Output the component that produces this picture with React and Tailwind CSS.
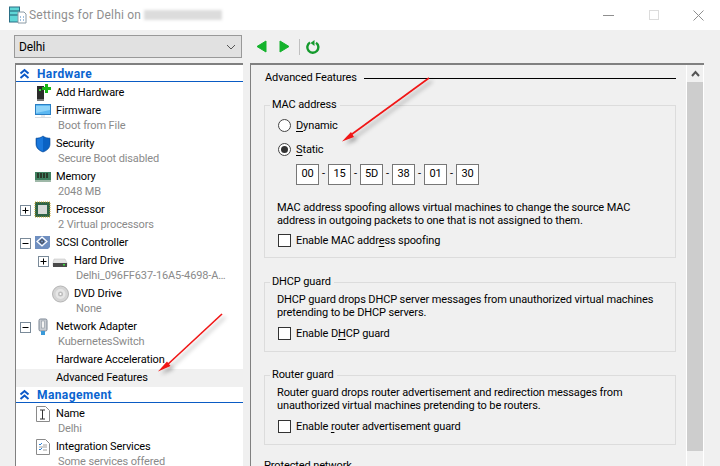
import React from "react";

const Plus = ({ minus }) => (
  <svg width="11" height="11" viewBox="0 0 11 11" className="shrink-0">
    <rect x="0.5" y="0.5" width="10" height="10" fill="#fff" stroke="#7a8a99" />
    <path d="M2.5 5.5h6" stroke="#000" />
    {!minus && <path d="M5.5 2.5v6" stroke="#000" />}
  </svg>
);

const icons = {
  add: (
    <svg width="18" height="18" viewBox="0 0 18 18">
      <rect x="3" y="2" width="7" height="14" fill="#2b2b2b" />
      <rect x="3" y="15" width="7" height="2" fill="#777" />
      <rect x="5" y="5" width="2" height="2" fill="#3ddc3d" />
      <path d="M11 0h3v3h3v3h-3v3h-3V6H8V3h3z" fill="#16b516" />
    </svg>
  ),
  firmware: (
    <svg width="18" height="18" viewBox="0 0 18 18">
      <rect x="1.5" y="2.5" width="15" height="10" fill="#5cb8f2" stroke="#2a7fc4" />
      <path d="M2 4h14v4L2 11z" fill="#8ed4fa" />
      <rect x="1" y="15" width="16" height="1" fill="#d8dde2" />
      <rect x="7" y="13" width="4" height="2" fill="#e8eaec" />
    </svg>
  ),
  security: (
    <svg width="18" height="18" viewBox="0 0 18 18">
      <path d="M9 1c2 1.600 4.500 2.200 7 2.200V9c0 4-3 6.500-7 8-4-1.500-7-4-7-8V3.200C4.500 3.200 7 2.600 9 1z" fill="#0a62c4" stroke="#0a4a96" strokeWidth="0.6" />
      <path d="M9 1.600V16.400C5.600 15 3 12.800 3 9V4c2.400 0 4.300-.8 6-2.400z" fill="#1a78dc" />
    </svg>
  ),
  memory: (
    <svg width="18" height="18" viewBox="0 0 18 18">
      <rect x="1" y="4" width="16" height="8" fill="#3f7f5f" />
      <rect x="3" y="5" width="2" height="5" fill="#2a3a2a" />
      <rect x="6" y="5" width="2" height="5" fill="#2a3a2a" />
      <rect x="9" y="5" width="2" height="5" fill="#2a3a2a" />
      <rect x="12" y="5" width="2" height="5" fill="#2a3a2a" />
      <rect x="1" y="12" width="16" height="2" fill="#9fb8a8" />
    </svg>
  ),
  cpu: (
    <svg width="18" height="18" viewBox="0 0 18 18">
      <rect x="1" y="1" width="15" height="15" fill="#2f6446" stroke="#c9a227" strokeDasharray="1 1" />
      <rect x="4" y="4" width="9" height="9" fill="#d6d9d6" />
    </svg>
  ),
  scsi: (
    <svg width="18" height="18" viewBox="0 0 18 18">
      <path d="M1 2h15v11l-2 2H1z" fill="#6f8fc0" />
      <path d="M8 3l5 4.500-5 4.500-5-4.500z" fill="none" stroke="#fff" strokeWidth="1.200" />
      <path d="M8 5.500l2.200 2-2.200 2-2.200-2z" fill="none" stroke="#333" />
    </svg>
  ),
  hdd: (
    <svg width="16" height="18" viewBox="0 0 16 18">
      <path d="M2 7h11l2 4v3H1v-3z" fill="#e4e4e4" stroke="#bbb" strokeWidth="0.5" />
      <rect x="1" y="11" width="14" height="4" fill="#4a4a4a" />
      <rect x="11" y="12" width="2" height="1.500" fill="#3ddc3d" />
    </svg>
  ),
  dvd: (
    <svg width="18" height="18" viewBox="0 0 18 18">
      <circle cx="8.500" cy="9" r="8" fill="#d4d4d4" stroke="#b5b5b5" />
      <circle cx="8.500" cy="9" r="5" fill="#e6e6e6" />
      <circle cx="8.500" cy="9" r="2.500" fill="#bdbdbd" />
      <circle cx="8.500" cy="9" r="1" fill="#fff" />
    </svg>
  ),
  net: (
    <svg width="18" height="18" viewBox="0 0 18 18">
      <rect x="5" y="1" width="8" height="12" rx="1.500" fill="#c8ccd2" stroke="#7d8794" />
      <rect x="7.500" y="3" width="3" height="7" fill="#f2f2f2" stroke="#8d96a2" strokeWidth="0.6" />
      <rect x="7" y="13" width="4" height="4" fill="#3a9ad9" />
    </svg>
  ),
  name: (
    <svg width="18" height="18" viewBox="0 0 18 18">
      <path d="M2.500 1.500h9l4 4v11h-13z" fill="#fff" stroke="#8a8a8a" />
      <path d="M6 5h2.500M11 5H8.500M8.500 5v9M6 14h5" stroke="#333" fill="none" />
    </svg>
  ),
  integ: (
    <svg width="18" height="18" viewBox="0 0 18 18">
      <path d="M2.500 1.500h9l4 4v11h-13z" fill="#fff" stroke="#8a8a8a" />
      <path d="M5 6l1 1 2-2" stroke="#2a7fd4" fill="none" />
      <path d="M5 11l1 1 2-2" stroke="#2a7fd4" fill="none" />
      <path d="M9 7h4M9 12h4M5 9h8" stroke="#a0a0a0" />
    </svg>
  ),
};

const Chevrons = () => (
  <svg width="11" height="11" viewBox="0 0 11 11" className="shrink-0">
    <path d="M1.500 5.500l4-3.500 4 3.500M1.500 10l4-3.500 4 3.500" fill="none" stroke="#0a58c8" strokeWidth="2" />
  </svg>
);

const Section = ({ label }) => (
  <div className="flex items-center h-[17px] pl-[3px] mb-[2px] border-b border-[#0a5bc4]">
    <Chevrons />
    <span className="ml-[7px] pt-[2px] font-bold text-[#0a64d0] text-[12px] tracking-[0.4px]">{label}</span>
  </div>
);

const Item = ({ indent = 0, expander, icon, label, sub, active }) => (
  <div>
    <div className={`flex items-center h-[18px] ${active ? "bg-[#f0f0f0]" : ""}`}>
      <div className="shrink-0 flex items-center" style={{ marginLeft: indent }}>
        <div className="w-[18px] pl-[4px] flex shrink-0">{expander && <Plus minus={expander === "minus"} />}</div>
        <div className="w-[22px] flex">{icon && icons[icon]}</div>
      </div>
      <span className="text-[11px] whitespace-nowrap text-black">{label}</span>
    </div>
    {sub && (
      <div className="h-[15px] -mt-[1px] mb-[1px] flex items-center text-[11px] text-[#8a8a8a] whitespace-nowrap" style={{ marginLeft: indent + 42 }}>
        {sub}
      </div>
    )}
  </div>
);

const Check = ({ children }) => (
  <div className="flex items-center h-[14px] gap-[5px]">
    <div className="w-[13px] h-[13px] border border-[#333] bg-white" />
    <span className="pt-[2px] text-[11px] text-black">{children}</span>
  </div>
);

const Group = ({ title, className, children }) => (
  <fieldset className={`min-w-0 border border-[#dcdcdc] mx-0 px-[12px] ${className}`}>
    <legend className="text-[11px] leading-[14px] ml-[-7px] px-[2px] pr-[3px] text-black">{title}</legend>
    {children}
  </fieldset>
);

const Guard = ({ title, line1, line2, check, mt }) => (
  <Group title={title} className={`${mt} h-[77px]`}>
    <p className="text-[11px] leading-[13px] mt-[4px] text-black whitespace-nowrap">{line1}<br />{line2}</p>
    <div className="mt-[7px] ml-[1px]"><Check>{check}</Check></div>
  </Group>
);

const Radio = ({ on, children }) => (
  <div className="flex items-center gap-[5px] h-[14px]">
    <div className="w-[13px] h-[13px] rounded-full border border-[#444] bg-white flex items-center justify-center">
      {on && <div className="w-[7px] h-[7px] rounded-full bg-[#333]" />}
    </div>
    <span className="pt-[2px] text-[11px] text-black">{children}</span>
  </div>
);

const octets = ["00", "15", "5D", "38", "01", "30"];

export default function App() {
  return (
    <div className="relative w-[720px] h-[466px] overflow-hidden bg-[#f0f0f0] font-['Roboto','Noto_Sans',sans-serif] tracking-[-0.12px]">
      {/* title bar */}
      <div className="h-[30px] bg-white flex items-center">
        <svg width="18" height="18" viewBox="0 0 18 18" className="ml-[9px]">
          <rect x="0.500" y="1" width="10" height="15" fill="#5fd6d6" stroke="#2a6f86" />
          <path d="M1 5h9M1 9h9" stroke="#1f5c70" />
          <path d="M9 6h6l2 2v9H9z" fill="#fff" stroke="#8a9aa5" />
          <path d="M11 11h1M14 11h1M11 14h1M14 14h1" stroke="#3a7fbf" />
        </svg>
        <span className="ml-[2px] text-[12px] text-[#8f8f8f] tracking-[0.2px]">Settings for Delhi on</span>
        <div className="ml-[3px] w-[78px] h-[10px] bg-[#dcdcdc] blur-[1.5px]" />
        <div className="ml-auto flex items-center">
          <div className="w-[11px] h-px bg-[#8f8f8f] mr-[35px]" />
          <div className="w-[10px] h-[10px] border border-[#dcdcdc] mr-[34px]" />
          <svg width="11" height="11" viewBox="0 0 11 11" className="mr-[16px]">
            <path d="M0.500 0.500l10 10M10.500 0.500l-10 10" stroke="#8f8f8f" />
          </svg>
        </div>
      </div>

      {/* toolbar */}
      <div className="h-[33px] flex items-center pb-0">
        <div className="ml-[14px] w-[228px] h-[23px] bg-[#e1e1e1] border border-[#999] flex items-center justify-between px-[4px]">
          <span className="text-[12px] text-black">Delhi</span>
          <svg width="10" height="6" viewBox="0 0 10 6" className="mr-[1px]"><path d="M1 1l4 4 4-4" fill="none" stroke="#555" /></svg>
        </div>
        <svg width="11" height="13" viewBox="0 0 11 13" className="ml-[14px]"><path d="M10 1v11L1 6.500z" fill="#14b32c" stroke="#14b32c" /></svg>
        <svg width="11" height="13" viewBox="0 0 11 13" className="ml-[12px]"><path d="M1 1v11l9-5.500z" fill="#14b32c" stroke="#14b32c" /></svg>
        <div className="ml-[9px] w-px h-[16px] bg-[#c0c0c0]" />
        <svg width="14" height="14" viewBox="0 0 14 14" className="ml-[6px]">
          <path d="M4 2.500a5.500 5.500 0 1 0 6 .2" fill="none" stroke="#149a2c" strokeWidth="2.400" />
          <path d="M4.500 0v6l4-3z" fill="#149a2c" transform="rotate(180 6.500 3)" />
        </svg>
      </div>

      {/* panels */}
      <div className="flex h-[403px]">
        {/* tree */}
        <div className="ml-[15px] w-[228px] h-full bg-white border-t-2 border-l border-t-[#808080] border-l-[#808080] overflow-hidden">
          <Section label="Hardware" />
          <Item icon="add" label="Add Hardware" />
          <Item icon="firmware" label="Firmware" sub="Boot from File" />
          <Item icon="security" label="Security" sub="Secure Boot disabled" />
          <Item icon="memory" label="Memory" sub="2048 MB" />
          <Item expander="plus" icon="cpu" label="Processor" sub="2 Virtual processors" />
          <Item expander="minus" icon="scsi" label="SCSI Controller" />
          <Item indent={18} expander="plus" icon="hdd" label="Hard Drive" sub="Delhi_096FF637-16A5-4698-A…" />
          <Item indent={18} icon="dvd" label="DVD Drive" sub="None" />
          <Item expander="minus" icon="net" label="Network Adapter" sub="KubernetesSwitch" />
          <Item label="Hardware Acceleration" />
          <Item label="Advanced Features" active />
          <div className="-mt-[1px]"><Section label="Management" /></div>
          <Item icon="name" label="Name" sub="Delhi" />
          <Item icon="integ" label="Integration Services" sub="Some services offered" />
        </div>

        {/* settings */}
        <div className="ml-[7px] w-[454px] h-full bg-[#f0f0f0] border-t-2 border-l border-t-[#808080] border-l-[#808080] flex overflow-hidden">
          <div className="w-[435px] shrink-0 pl-[13px] pr-[10px] pt-[5px] overflow-hidden">
            <div className="flex items-center h-[16px] pl-px">
              <span className="text-[11px] text-black whitespace-nowrap">Advanced Features</span>
              <div className="flex-1 h-px bg-black ml-[7px]" />
            </div>
            <Group title="MAC address" className="mt-[12px] h-[160px]">
              <div className="ml-[1px] mt-[6px] flex flex-col gap-[10px]">
                <Radio><span className="underline underline-offset-2">D</span>ynamic</Radio>
                <Radio on><span className="underline underline-offset-2">S</span>tatic</Radio>
              </div>
              <div className="ml-[19px] mt-[8px] flex items-center">
                {octets.map((o, i) => (
                  <React.Fragment key={o}>
                    <div className="w-[23px] h-[21px] border border-[#777] bg-white flex items-center justify-center text-[11px] text-black">{o}</div>
                    {i < 5 && <span className="w-[9px] text-center text-[11px] text-black">-</span>}
                  </React.Fragment>
                ))}
              </div>
              <p className="mt-[16px] text-[11px] leading-[13px] text-black whitespace-nowrap">
                MAC address spoofing allows virtual machines to change the source MAC<br />
                address in outgoing packets to one that is not assigned to them.
              </p>
              <div className="mt-[6px] ml-[1px]"><Check>Enable MAC addr<span className="underline underline-offset-2">e</span>ss spoofing</Check></div>
            </Group>
            <Guard mt="mt-[17px]" title="DHCP guard"
              line1="DHCP guard drops DHCP server messages from unauthorized virtual machines"
              line2="pretending to be DHCP servers."
              check={<>Enable D<span className="underline underline-offset-2">H</span>CP guard</>} />
            <Guard mt="mt-[16px]" title="Router guard"
              line1="Router guard drops router advertisement and redirection messages from"
              line2="unauthorized virtual machines pretending to be routers."
              check={<>Enable <span className="underline underline-offset-2">r</span>outer advertisement guard</>} />
            <div className="mt-[13px] text-[11px] text-black">Protected network</div>
          </div>
          <div className="w-[18px] h-full bg-white shrink-0 px-px">
            <div className="w-[16px] h-full bg-[#f0f0f0] flex flex-col">
              <div className="h-[17px] flex items-center justify-center">
                <svg width="9" height="7" viewBox="0 0 9 7"><path d="M1 6l3.500-4 3.500 4" fill="none" stroke="#555" strokeWidth="2" /></svg>
              </div>
              <div className="h-[369px] bg-[#cdcdcd]" />
            </div>
          </div>
        </div>
      </div>

      {/* annotation arrows */}
      <svg width="720" height="466" className="absolute inset-0 pointer-events-none">
        <defs>
          <filter id="s" x="-20%" y="-20%" width="140%" height="140%">
            <feDropShadow dx="3" dy="3" stdDeviation="2" floodColor="#000" floodOpacity="0.35" />
          </filter>
        </defs>
        <g filter="url(#s)">
          <path d="M429 78L348 137" stroke="#f01414" strokeWidth="1.600" />
          <path d="M342 141.500l9-9.500 3 5z" fill="#f01414" />
          <path d="M222 314L166 366" stroke="#f01414" strokeWidth="1.600" />
          <path d="M158 371.500l9-10 3.500 4.500z" fill="#f01414" />
        </g>
      </svg>
    </div>
  );
}
